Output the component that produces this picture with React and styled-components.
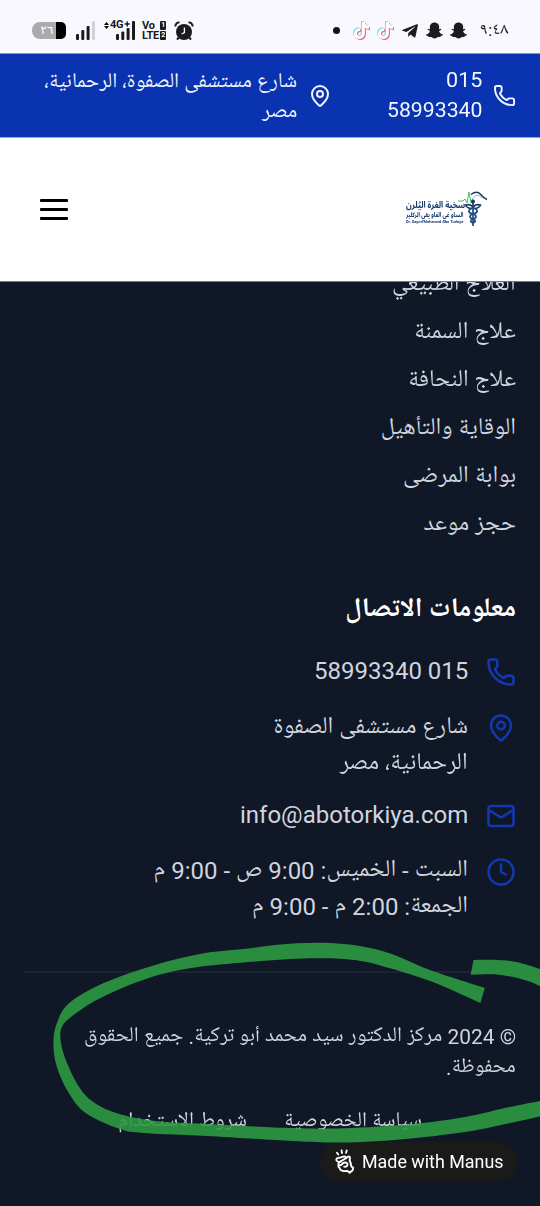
import React, { useLayoutEffect, useRef, useState } from 'react';
import styled, { createGlobalStyle } from 'styled-components';
import { Phone, MapPin, Mail, Clock } from 'lucide-react';
import { FaSnapchatGhost, FaTelegramPlane, FaTiktok } from 'react-icons/fa';

const Global = createGlobalStyle`
  * { box-sizing: border-box; }
  body { margin: 0; background: #101726; font-family: Roboto, "Noto Naskh Arabic UI", "Noto Naskh Arabic", "DejaVu Sans", sans-serif; }
`;

const Screen = styled.div`
  position: relative;
  width: 540px;
  height: 1206px;
  overflow: hidden;
  background: #101726;
  display: flex;
  flex-direction: column;
`;

/* One line of text condensed or widened to a set measure */
const LineBox = styled.span`
  display: block;
  flex: none;
  width: ${(p) => p.$w}px;
  height: ${(p) => p.$lh}px;
  line-height: ${(p) => p.$lh}px;
  font-size: ${(p) => p.$size}px;
  font-weight: ${(p) => p.$weight || 400};
  white-space: nowrap;
`;
const LineText = styled.span`
  display: inline-block;
  margin-top: ${(p) => p.$drop || 0}px;
  transform-origin: ${(p) => (p.$ltr ? 'left' : 'right')} center;
`;
function Line({ w, size, lh, weight, ltr, drop, children }) {
  const ref = useRef(null);
  const [scale, setScale] = useState(1);
  useLayoutEffect(() => {
    if (ref.current) setScale(w / ref.current.offsetWidth);
  }, [w]);
  return (
    <LineBox $w={w} $size={size} $lh={lh} $weight={weight} dir={ltr ? 'ltr' : 'rtl'}>
      <LineText ref={ref} $ltr={ltr} $drop={drop} style={{ transform: `scaleX(${scale})` }}>{children}</LineText>
    </LineBox>
  );
}

const StatusBar = styled.div`
  flex: none;
  height: 54px;
  padding: 8px 31px 0 32px;
  background: #f9f8ff;
  border-bottom: 1px solid #7894d4;
  display: flex;
  align-items: center;
  justify-content: space-between;
  color: #1b1b1d;
`;
const StatusGroup = styled.div`
  display: flex;
  align-items: center;
  gap: ${(p) => p.$gap}px;
  svg { display: block; }
`;
const Battery = styled.div`
  width: 34px;
  height: 17px;
  margin-right: 2px;
  border-radius: 8px 5px 5px 8px;
  background: linear-gradient(90deg, #aaa9ad 24px, #000 24px);
  color: #fff;
  font: 12px/17px "DejaVu Sans", sans-serif;
  text-align: center;
  padding-right: 4px;
`;
const Volte = styled.div`
  width: 24px;
  margin: 0 0 0 -2px;
  font: 700 11px/10px Roboto, sans-serif;
  letter-spacing: -0.3px;
`;
const VolteRow = styled.div`
  display: flex;
  align-items: center;
  justify-content: space-between;
`;
const Sim = styled.span`
  width: 6px;
  height: 9px;
  border-radius: 1px;
  background: #1b1b1d;
  color: #fff;
  font-size: 7px;
  line-height: 9px;
  text-align: center;
`;
const Dot = styled.span`
  width: 7px;
  height: 7px;
  border-radius: 50%;
  background: #111;
  margin-right: 6px;
`;
const TikTok = styled(FaTiktok)`
  color: #fff;
  filter: drop-shadow(-1px -0.7px 0 #6fe3e2) drop-shadow(1px 1px 0 #ee5a76);
`;
const StatusTime = styled.div`
  margin-left: 6px;
`;

const TopBar = styled.div`
  flex: none;
  height: 84px;
  padding: 11px 24px 0;
  background: #0933b0;
  color: #f3f6ff;
  display: flex;
  direction: rtl;
  align-items: flex-start;
  border-bottom: 1px solid #8da3dc;
`;
const TopIcon = styled.span`
  margin-top: ${(p) => p.$drop}px;
  height: 24px;
  svg { display: block; }
`;
const TopText = styled.div`
  margin-right: ${(p) => p.$gap}px;
  margin-left: ${(p) => p.$after || 0}px;
  display: flex;
  flex-direction: column;
  align-items: flex-start;
`;

const Header = styled.header`
  flex: none;
  height: 144px;
  padding: 0 51px 0 40px;
  background: #fff;
  border-bottom: 1px solid #76797f;
  display: flex;
  align-items: center;
  justify-content: space-between;
`;
const MenuButton = styled.button`
  display: flex;
  flex-direction: column;
  gap: 6.4px;
  width: 28px;
  padding: 0;
  border: 0;
  background: none;
  i { height: 2.6px; border-radius: 1px; background: #000; }
`;
const Logo = styled.div`
  display: flex;
  width: 83px;
  height: 38px;
  color: #17396c;
  font-family: Roboto, "Noto Sans Arabic", "DejaVu Sans", sans-serif;
`;
const LogoWords = styled.div`
  display: flex;
  flex-direction: column;
  width: 59px;
  padding-top: 9px;
`;

const Footer = styled.footer`
  flex: 1;
  overflow: hidden;
  padding: 0 24px;
  direction: rtl;
  color: #cfd5de;
`;
const LinkList = styled.ul`
  list-style: none;
  margin: -17px 0 0;
  padding: 0;
  display: flex;
  flex-direction: column;
  gap: 12px;
`;
const Heading = styled.h3`
  margin: 47px 0 23px;
  color: #fff;
`;
const Contacts = styled.div`
  display: flex;
  flex-direction: column;
  gap: 18px;
`;
const Contact = styled.div`
  display: flex;
  align-items: flex-start;
  gap: 18px;
  svg { flex: none; color: #1239b0; margin-top: ${(p) => p.$drop}px; }
`;
const Legal = styled.div`
  margin-top: 48px;
  padding-top: 48px;
  border-top: 2px solid #1b2433;
`;
const LegalLinks = styled.div`
  display: flex;
  justify-content: center;
  gap: 37px;
  margin-top: 24px;
`;
const Badge = styled.div`
  position: absolute;
  right: 23px;
  bottom: 24px;
  width: 197px;
  height: 40px;
  border-radius: 20px;
  background: #1a1a19;
  color: #fff;
  display: flex;
  align-items: center;
  padding-left: 13px;
  gap: 5px;
`;
const Marker = styled.svg`
  position: absolute;
  left: 0;
  top: 930px;
`;

const outer = [[484.8,988],[430,970],[385.7,952],[344,944],[296,943.3],[241,949.3],[199.7,954],[155,965],[103,983.3],[69,1003.3],[56.8,1023.3],[53.4,1043.3],[56.8,1066.7],[69,1093.3],[86,1113.3],[120.5,1129.3],[148,1133.3],[206.6,1136],[292.7,1141],[344,1142.5],[400,1139.5],[465,1132],[510,1123],[542,1116]];
const inner = [[542,1100.5],[509.6,1107],[465,1117],[413,1124],[344,1128.3],[292.7,1128],[206.6,1124],[155,1121],[117,1113.3],[93,1101.7],[79,1086.7],[67,1063],[61,1043],[62,1026.7],[75.8,1013.3],[103,996.7],[148,978.3],[189.4,968.3],[241,962.7],[310,958.3],[354.7,960],[389,968],[430,981],[465,996],[480.4,1003]];
const tailTop = [[473.5,960],[497,960],[516.5,962],[542,969.5]];
const tailBottom = [[542,987],[527,980.7],[499,974.7],[470.7,974.7]];

// Catmull-Rom spline through the points, written as cubic segments
const spline = (pts) => pts.slice(0, -1).map((p, i) => {
  const a = pts[i - 1] || p, c = pts[i + 1], d = pts[i + 2] || c;
  return `C${p[0] + (c[0] - a[0]) / 6} ${p[1] + (c[1] - a[1]) / 6} ${c[0] - (d[0] - p[0]) / 6} ${c[1] - (d[1] - p[1]) / 6} ${c[0]} ${c[1]}`;
}).join('');
const ribbon = (a, b) => `M${a[0]}${spline(a)}L${b[0]}${spline(b)}Z`;

const Signal = () => (
  <svg width="20" height="19" viewBox="0 0 20 19" fill="#1b1b1d">
    <rect x="0" y="13" width="3" height="6" rx="1" /><rect x="5.3" y="9" width="3" height="10" rx="1" />
    <rect x="10.6" y="5" width="3" height="14" rx="1" /><rect x="16" y="0" width="3" height="19" rx="1" fill="#d2d1d8" />
  </svg>
);
const NetBox = styled.div`
  position: relative;
  width: 32px;
  height: 19px;
  display: flex;
  justify-content: flex-end;
`;
const NetLabel = styled.span`
  position: absolute;
  left: 6px;
  top: -2px;
  font: 700 11px/12px Roboto, sans-serif;
  letter-spacing: -0.4px;
`;
const NetArrows = styled.svg`
  position: absolute;
  left: 0;
  top: 1px;
`;
const NetBars = () => (
  <svg width="20" height="19" viewBox="0 0 20 19" fill="#1b1b1d">
    <rect x="0" y="13" width="3" height="6" rx="1" /><rect x="5.3" y="10.5" width="3" height="8.5" rx="1" />
    <rect x="10.6" y="7" width="3" height="12" rx="1" /><rect x="16" y="0" width="3" height="19" rx="1" />
    <path d="M8.7 3h5M11.2.5v5" stroke="#1b1b1d" strokeWidth="1.5" />
  </svg>
);
const AlarmIcon = () => (
  <svg width="20" height="20" viewBox="0 0 20 20">
    <circle cx="10" cy="11" r="8" fill="#1b1b1d" />
    <path d="M1.2 5.5C1.5 3.2 3.2 1.5 5.5 1.2M14.5 1.2c2.3.3 4 2 4.3 4.3M4.8 16.5 3 18.7M15.2 16.5l1.8 2.2" stroke="#1b1b1d" strokeWidth="2" fill="none" />
    <path d="M10.4 6.5v5L7.6 13" stroke="#fff" strokeWidth="1.3" fill="none" />
  </svg>
);
const HandIcon = () => (
  <svg width="24" height="28" viewBox="0 0 24 28" fill="none" stroke="#fff" strokeWidth="1.9" strokeLinecap="round" strokeLinejoin="round">
    <path d="M4 4.8 5.2 6.400M8.600 2.500l.4 2.500M13.700 2.400l-.6 2.500" />
    <path d="M8 13.500C5.500 14.500 3 13.200 3.300 11.300c.3-1.300 1.500-1.500 2.800-1.400l4.200-1.300c1.800-.5 3 .5 2.600 1.600l2-1.400c1.300-.8 2.300.2 2 1.500l-.3 2.200c1 1.800 1.300 3.300 1.400 4.900.1 1.300 1.200 2 2.200 2.300l-.6 2.500-3 2.600c-.9-1.500-2-2-3.600-1.800-3.100.4-5.900-.7-6.500-3.200-1.200-.8-1.500-1.800-.8-2.800" />
    <path d="M12.900 10.200 8.200 13c-2.400 1.400-3.600 2.600-2.500 4 1.300 1.100 3-.4 4-1.500 1.400-1.500 4.400-1.400 4.800.5.3 1.800-1.200 3.200-3.300 2.700" />
  </svg>
);
const Emblem = () => (
  <svg width="24" height="38" viewBox="0 0 24 38" fill="none" overflow="visible">
    <path d="M-7 10h5l2-2 2 4 2-11 2 11 1.5-4" stroke="#4fbd62" strokeWidth="1" />
    <path d="M6 3.500c4-3 7-3 9.500-.2 1.500 2 3 4 6.500 5.200" stroke="#17396c" strokeWidth="1.500" />
    <path d="M7 8.500c3.500-5 6.500-5.500 10-1.700" stroke="#8fa9c4" strokeWidth=".9" />
    <circle cx="8" cy="10.500" r="2" fill="#17396c" />
    <path d="M8 12v23M.5 14c4-1 6 0 7.500 2 1.500-2 3.500-3 7.500-2-1 3-5 4-7.500 3-2.500 1-6.500 0-7.500-3z" stroke="#17396c" strokeWidth="1.600" />
    <path d="M8 17c-6 2-5 5 0 6 4 1 4 4 0 5-3 1-3 3 0 4M8 17c6 2 5 5 0 6-4 1-4 4 0 5 3 1 3 3 0 4" stroke="#24507f" strokeWidth="1.800" />
  </svg>
);

const links = [['العلاج الطبيعي', 124], ['علاج السمنة', 102], ['علاج النحافة', 108], ['الوقاية والتأهيل', 135], ['بوابة المرضى', 113], ['حجز موعد', 93]];

export default function App() {
  return (
    <Screen>
      <Global />
      <StatusBar>
        <StatusGroup $gap={8}>
          <Battery>٢٦</Battery>
          <Signal />
          <NetBox>
            <NetBars />
            <NetLabel>4G</NetLabel>
            <NetArrows width="5" height="7" viewBox="0 0 5 7"><path d="M0 3 2.5 0 5 3zM0 4l2.5 3L5 4z" /></NetArrows>
          </NetBox>
          <Volte>
            <VolteRow>Vo<Sim>1</Sim></VolteRow>
            <VolteRow>LTE<Sim>2</Sim></VolteRow>
          </Volte>
          <AlarmIcon />
        </StatusGroup>
        <StatusGroup $gap={7}>
          <Dot />
          <TikTok size={17} />
          <TikTok size={17} />
          <FaTelegramPlane size={18} />
          <FaSnapchatGhost size={17} />
          <FaSnapchatGhost size={17} />
          <StatusTime><Line w={29} size={16} lh={20} ltr>٩:٤٨</Line></StatusTime>
        </StatusGroup>
      </StatusBar>
      <TopBar>
        <TopIcon $drop={19}><Phone size={23} strokeWidth={2} /></TopIcon>
        <TopText $gap={11} $after={55}>
          <Line w={36} size={21} lh={30} ltr>015</Line>
          <Line w={95} size={21} lh={30} ltr>58993340</Line>
        </TopText>
        <TopIcon $drop={19}><MapPin size={24} strokeWidth={2} /></TopIcon>
        <TopText $gap={11}>
          <Line w={253} size={21} lh={30} drop={3}>شارع مستشفى الصفوة، الرحمانية،</Line>
          <Line w={35} size={21} lh={30} drop={3}>مصر</Line>
        </TopText>
      </TopBar>
      <Header>
        <MenuButton aria-label="القائمة"><i /><i /><i /></MenuButton>
        <Logo>
          <LogoWords>
            <Line w={59} size={9} lh={11} weight={700}>سخية الغرة اليُلرن</Line>
            <Line w={57} size={6.5} lh={8} weight={700}>الساو غي الفاو يقي الركلير</Line>
            <Line w={57} size={4} lh={5} weight={700} ltr>Dr. Sayed Mohamed Abo Turkiya</Line>
          </LogoWords>
          <Emblem />
        </Logo>
      </Header>
      <Footer>
        <LinkList>
          {links.map(([t, w]) => <li key={t}><Line w={w} size={24} lh={36} drop={2}>{t}</Line></li>)}
        </LinkList>
        <Heading><Line w={171} size={27} lh={42} weight={700} drop={2}>معلومات الاتصال</Line></Heading>
        <Contacts>
          <Contact $drop={4}><Phone size={30} /><Line w={154} size={24} lh={36} ltr>58993340 015</Line></Contact>
          <Contact $drop={6}><MapPin size={30} />
            <div><Line w={195} size={24} lh={36} drop={3}>شارع مستشفى الصفوة</Line><Line w={128} size={24} lh={36} drop={3}>الرحمانية، مصر</Line></div>
          </Contact>
          <Contact $drop={4}><Mail size={30} /><Line w={228} size={24} lh={36} ltr>info@abotorkiya.com</Line></Contact>
          <Contact $drop={6}><Clock size={30} />
            <div>
              <Line w={314} size={24} lh={36} drop={2}>السبت - الخميس: 9:00 ص - 9:00 م</Line>
              <Line w={216} size={24} lh={36} drop={2}>الجمعة: 2:00 م - 9:00 م</Line>
            </div>
          </Contact>
        </Contacts>
        <Legal>
          <Line w={432} size={21} lh={30} drop={1}>© 2024 مركز الدكتور سيد محمد أبو تركية. جميع الحقوق</Line>
          <Line w={70} size={21} lh={30} drop={2}>محفوظة.</Line>
          <LegalLinks>
            <Line w={138} size={21} lh={30} drop={2}>سياسة الخصوصية</Line>
            <Line w={129} size={21} lh={30} drop={2}>شروط الاستخدام</Line>
          </LegalLinks>
        </Legal>
      </Footer>
      <Badge><HandIcon /><Line w={142} size={18} lh={24} ltr>Made with Manus</Line></Badge>
      <Marker width="540" height="230" viewBox="0 930 540 230" fill="#2c9942" fillOpacity=".9">
        <path d={ribbon(outer, inner)} />
        <path d={ribbon(tailTop, tailBottom)} />
      </Marker>
    </Screen>
  );
}
